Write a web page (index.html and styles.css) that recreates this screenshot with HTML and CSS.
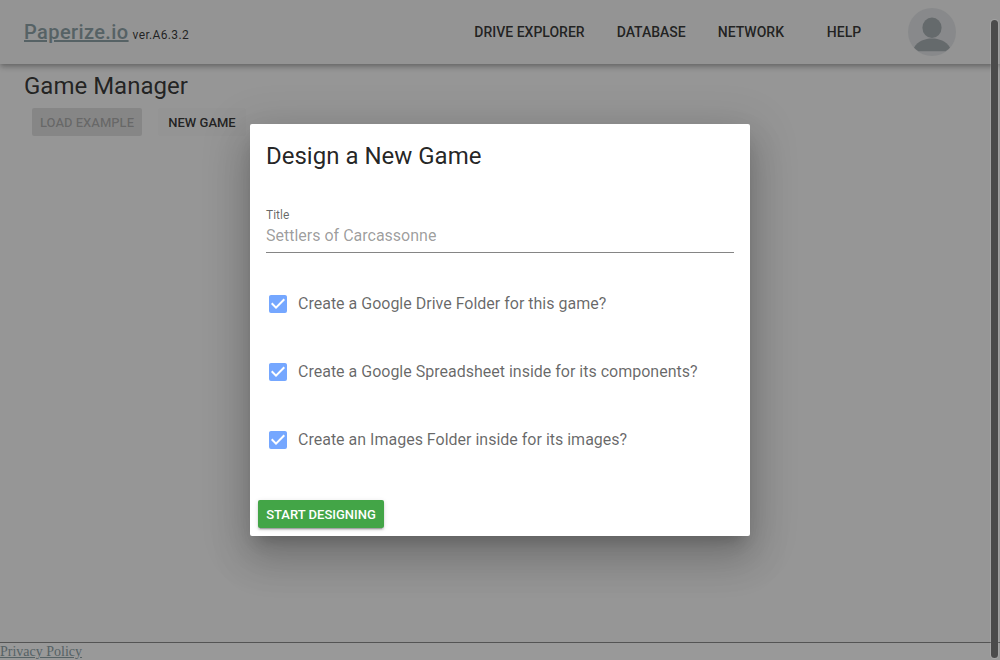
FILE: index.html
```html
<!DOCTYPE html>
<html lang="en">
<head>
<meta charset="utf-8">
<title>Paperize.io</title>
<link rel="stylesheet" href="styles.css">
</head>
<body>
<div class="app">
  <header class="toolbar">
    <div class="brand"><a class="logo" href="#">Paperize.io</a><span class="version">ver.A6.3.2</span></div>
    <nav class="nav">
      <a class="nav-item">Drive Explorer</a>
      <a class="nav-item">Database</a>
      <a class="nav-item">Network</a>
      <a class="nav-item nav-help">Help</a>
    </nav>
    <svg class="avatar" viewBox="0 0 48 48">
      <circle cx="24" cy="24" r="24" fill="#dfe2e5"/>
      <ellipse cx="24" cy="19.700" rx="9.600" ry="10.300" fill="#a0a8ac"/>
      <path d="M6 39.500C10 33 17 30.500 24 30.500S38 33 42 39.500C40.500 41.500 39 42.500 37.500 43.200H10.500C9 42.500 7.500 41.500 6 39.500Z" fill="#a0a8ac"/>
    </svg>
  </header>
  <main class="content">
    <h1 class="headline">Game Manager</h1>
    <div class="actions">
      <button class="btn btn-disabled" disabled>Load Example</button>
      <button class="btn btn-new">New Game</button>
    </div>
  </main>
</div>
<footer class="footer"><a class="privacy" href="#">Privacy Policy</a></footer>
<div class="overlay">
  <section class="dialog">
    <h2 class="dialog-title">Design a New Game</h2>
    <div class="field">
      <label class="field-label" for="title">Title</label>
      <input class="field-input" id="title" placeholder="Settlers of Carcassonne">
    </div>
    <div class="checks">
      <div class="check"><svg class="box" viewBox="0 0 24 24"><path d="M10 17L5 12L6.410 10.580L10 14.170L17.590 6.580L19 8M19 3H5C3.890 3 3 3.890 3 5V19A2 2 0 0 0 5 21H19A2 2 0 0 0 21 19V5C21 3.890 20.100 3 19 3Z"/></svg><span class="check-label">Create a Google Drive Folder for this game?</span></div>
      <div class="check"><svg class="box" viewBox="0 0 24 24"><path d="M10 17L5 12L6.410 10.580L10 14.170L17.590 6.580L19 8M19 3H5C3.890 3 3 3.890 3 5V19A2 2 0 0 0 5 21H19A2 2 0 0 0 21 19V5C21 3.890 20.100 3 19 3Z"/></svg><span class="check-label">Create a Google Spreadsheet inside for its components?</span></div>
      <div class="check"><svg class="box" viewBox="0 0 24 24"><path d="M10 17L5 12L6.410 10.580L10 14.170L17.590 6.580L19 8M19 3H5C3.890 3 3 3.890 3 5V19A2 2 0 0 0 5 21H19A2 2 0 0 0 21 19V5C21 3.890 20.100 3 19 3Z"/></svg><span class="check-label">Create an Images Folder inside for its images?</span></div>
    </div>
    <button class="btn btn-start">Start Designing</button>
  </section>
</div>
<div class="scroll-thumb"></div>
</body>
</html>
```
FILE: styles.css
```css
* { box-sizing: border-box; }
body {
  margin: 0;
  height: 660px;
  overflow: hidden;
  display: flex;
  flex-direction: column;
  background: #fff;
  color: rgba(0, 0, 0, .87);
  font-family: Roboto, sans-serif;
}
.app { height: 642px; background: #fafafa; }
.toolbar {
  position: relative;
  display: flex;
  align-items: center;
  height: 64px;
  padding: 0 44px 0 24px;
  background: #f5f5f5;
  box-shadow: 0 2px 4px -1px rgba(0,0,0,.2), 0 4px 5px rgba(0,0,0,.14), 0 1px 10px rgba(0,0,0,.12);
}
.brand { flex: 1; padding-top: 2px; line-height: 30px; white-space: nowrap; }
.logo { font-size: 20px; font-weight: 500; letter-spacing: .4px; color: #84999f; }
.version { margin-left: 4px; font-size: 12px; letter-spacing: .35px; }
.nav { display: flex; }
.nav-item {
  min-width: 88px;
  padding: 0 16px;
  font-size: 14px;
  line-height: 36px;
  font-weight: 500;
  text-align: center;
  text-transform: uppercase;
}
.avatar { width: 48px; height: 48px; margin-left: 20px; }
.content { padding: 6px 24px; }
.headline { margin: 0; font-size: 24px; line-height: 32px; font-weight: 400; }
.actions { display: flex; gap: 16px; padding: 6px 8px; }
.btn {
  height: 28px;
  padding: 0 8px;
  border: 0;
  border-radius: 2px;
  font: 500 13px Roboto, sans-serif;
  text-transform: uppercase;
  white-space: nowrap;
  color: rgba(0, 0, 0, .87);
}
.btn-disabled { width: 110px; background: #dcdcdc; color: rgba(0, 0, 0, .26); }
.btn-new { width: 88px; background: #f5f5f5; }
.footer { height: 18px; border-top: 1px solid #808080; font: 14px/17px "Liberation Serif", serif; }
.privacy { color: #84999f; }
.overlay {
  position: absolute;
  inset: 0;
  display: flex;
  align-items: center;
  justify-content: center;
  background: rgba(33, 33, 33, .46);
}
.dialog {
  width: 500px;
  height: 412px;
  border-radius: 2px;
  background: #fff;
  box-shadow: 0 11px 15px -7px rgba(0,0,0,.2), 0 24px 38px 3px rgba(0,0,0,.14), 0 9px 46px 8px rgba(0,0,0,.12);
}
.dialog-title { margin: 0; padding: 16px 16px 0; font-size: 24px; line-height: 32px; font-weight: 400; }
.field { display: flex; flex-direction: column; margin: 36px 16px 0; border-bottom: 1px solid #858585; }
.field-label { font-size: 12px; line-height: 14px; color: rgba(0, 0, 0, .6); }
.field-input {
  height: 30px;
  padding: 0 0 4px;
  border: 0;
  outline: 0;
  font: 16px Roboto, sans-serif;
}
.field-input::placeholder { color: rgba(0, 0, 0, .4); }
.checks { display: flex; flex-direction: column; gap: 44px; padding: 39px 16px 0; }
.check { display: flex; align-items: center; gap: 8px; height: 24px; font-size: 16px; color: rgba(0, 0, 0, .6); }
.check-label { padding-bottom: 2px; }
.box { width: 24px; height: 24px; fill: #75a7ff; }
.btn-start {
  width: 126px;
  margin: 48px 8px 0;
  background: #43a547;
  color: #fff;
  box-shadow: 0 3px 1px -2px rgba(0,0,0,.2), 0 2px 2px rgba(0,0,0,.14), 0 1px 5px rgba(0,0,0,.12);
}
.scroll-thumb {
  position: absolute;
  top: 19px;
  right: 1px;
  width: 9px;
  height: 640px;
  border: 1px solid rgba(255, 255, 255, .12);
  border-radius: 5px;
  background: #4b4b4b;
  background-clip: padding-box;
}
```
